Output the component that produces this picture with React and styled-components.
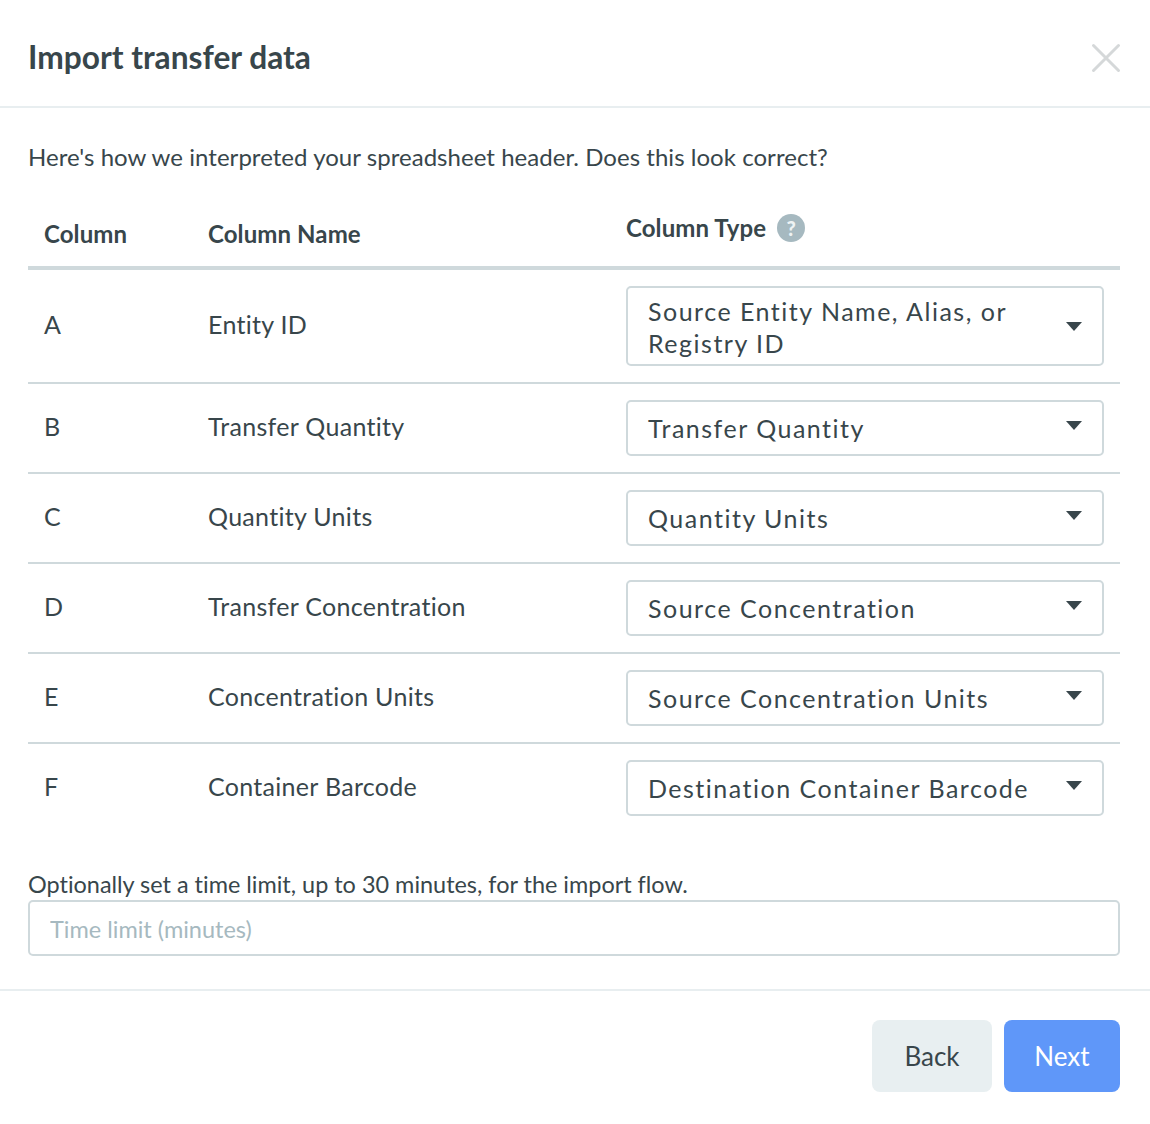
import React from "react";
import styled, { createGlobalStyle } from "styled-components";

const GlobalStyle = createGlobalStyle`
  html, body {
    margin: 0;
    padding: 0;
    background: #fff;
  }
  * {
    box-sizing: border-box;
  }
  body {
    font-family: Lato, "Liberation Sans", sans-serif;
    font-variant-ligatures: none;
    color: #38464b;
  }
`;

const Modal = styled.div`
  width: 1150px;
  height: 1124px;
  background: #fff;
`;

const Header = styled.header`
  height: 108px;
  padding: 9px 29px 0 28px;
  display: flex;
  align-items: center;
  justify-content: space-between;
  border-bottom: 2px solid #e8eef0;
`;

const Title = styled.h1`
  margin: -2px 0 0;
  font-size: 31.7px;
  font-weight: 700;
  color: #38464b;
`;

const Body = styled.div`
  padding: 35px 30px 0 28px;
`;

const Intro = styled.p`
  margin: 0;
  font-size: 24px;
  letter-spacing: 0.04px;
  line-height: 28px;
`;

const TableHead = styled.div`
  height: 85px;
  margin-top: 14px;
  display: grid;
  grid-template-columns: 164px 418px 1fr;
  padding-left: 16px;
  border-bottom: 4px solid #cfd9dc;
  font-size: 24px;
  letter-spacing: 0.1px;
  font-weight: 700;
`;

const HeadCell = styled.div`
  padding-top: 35px;
  line-height: 28px;
`;

const TypeHeadCell = styled(HeadCell)`
  padding-top: 29px;
  display: flex;
  align-items: center;
  gap: 11px;
  height: 57px;
`;

const HelpIcon = styled.span`
  width: 28px;
  height: 28px;
  border-radius: 50%;
  background: #a6b9c0;
  color: #eef3f4;
  font-size: 20px;
  font-weight: 900;
  display: flex;
  align-items: center;
  justify-content: center;
`;

const Row = styled.div`
  display: grid;
  grid-template-columns: 164px 418px 478px;
  padding: 16px 0 16px 16px;
  border-bottom: ${(p) => (p.$last ? "none" : "2px solid #cfd9dc")};
  font-size: 25px;
  letter-spacing: 0.3px;
  align-items: center;
`;

const Cell = styled.div`
  line-height: 28px;
  position: relative;
  top: -2px;
`;

const Select = styled.div`
  min-height: 56px;
  padding: ${(p) => (p.$tall ? "7px 20px 5px 20px" : "10px 20px 8px 20px")};
  border: 2px solid #cfd9dc;
  border-radius: 5px;
  display: flex;
  align-items: ${(p) => (p.$tall ? "center" : "flex-start")};
  justify-content: space-between;
  font-size: 25px;
  line-height: 32px;
  letter-spacing: 1.5px;
`;

const SelectLabel = styled.span`
  max-width: 390px;
`;

const Caret = styled.span`
  flex: none;
  margin-top: ${(p) => (p.$tall ? "-2px" : "9px")};
  width: 0;
  height: 0;
  border-left: 8px solid transparent;
  border-right: 8px solid transparent;
  border-top: 9px solid #38464b;
`;

const LimitLabel = styled.label`
  display: block;
  margin-top: 38px;
  font-size: 23.45px;
  line-height: 28px;
`;

const LimitInput = styled.input`
  display: block;
  width: 100%;
  height: 56px;
  margin-top: 2px;
  padding: 2px 20px 0;
  border: 2px solid #cfd9dc;
  border-radius: 5px;
  font-family: inherit;
  font-variant-ligatures: none;
  font-size: 23.5px;
  color: #38464b;
  outline: none;

  &::placeholder {
    color: #a6b9c0;
    opacity: 1;
  }
`;

const Footer = styled.footer`
  margin-top: 33px;
  padding: 29px 30px 0 0;
  border-top: 2px solid #e8eef0;
  display: flex;
  justify-content: flex-end;
  gap: 12px;
`;

const Button = styled.button`
  width: ${(p) => (p.$primary ? "116px" : "120px")};
  height: 72px;
  border: none;
  border-radius: 8px;
  background: ${(p) => (p.$primary ? "#5f97f9" : "#e8eff1")};
  color: ${(p) => (p.$primary ? "#fff" : "#38464b")};
  font-family: inherit;
  font-size: 26px;
`;

const rows = [
  { col: "A", name: "Entity ID", type: "Source Entity Name, Alias, or Registry ID", tall: true },
  { col: "B", name: "Transfer Quantity", type: "Transfer Quantity" },
  { col: "C", name: "Quantity Units", type: "Quantity Units" },
  { col: "D", name: "Transfer Concentration", type: "Source Concentration" },
  { col: "E", name: "Concentration Units", type: "Source Concentration Units" },
  { col: "F", name: "Container Barcode", type: "Destination Container Barcode" },
];

const App = () => {
  return (
    <Modal>
      <GlobalStyle />
      <Header>
        <Title>Import transfer data</Title>
        <svg width="30" height="30" viewBox="0 0 30 30" fill="none">
          <path d="M2.5 2.5L27.5 27.5M27.5 2.5L2.5 27.5" stroke="#d5d8d9" strokeWidth="3" strokeLinecap="round" />
        </svg>
      </Header>
      <Body>
        <Intro>Here's how we interpreted your spreadsheet header. Does this look correct?</Intro>
        <TableHead>
          <HeadCell>Column</HeadCell>
          <HeadCell>Column Name</HeadCell>
          <TypeHeadCell>
            Column Type
            <HelpIcon>?</HelpIcon>
          </TypeHeadCell>
        </TableHead>
        {rows.map((row, i) => (
          <Row key={row.col} $last={i === rows.length - 1}>
            <Cell>{row.col}</Cell>
            <Cell>{row.name}</Cell>
            <Select $tall={row.tall}>
              <SelectLabel>{row.type}</SelectLabel>
              <Caret $tall={row.tall} />
            </Select>
          </Row>
        ))}
        <LimitLabel>Optionally set a time limit, up to 30 minutes, for the import flow.</LimitLabel>
        <LimitInput placeholder="Time limit (minutes)" />
      </Body>
      <Footer>
        <Button>Back</Button>
        <Button $primary>Next</Button>
      </Footer>
    </Modal>
  );
};

export default App;
